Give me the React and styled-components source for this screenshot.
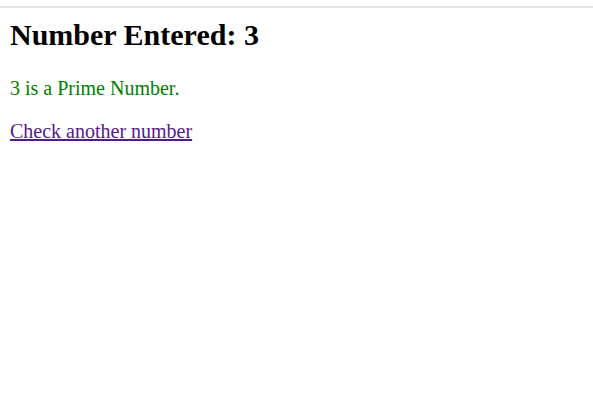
import styled, { createGlobalStyle } from "styled-components";

const Global = createGlobalStyle`
  body {
    margin: 0;
    font-family: "Liberation Serif", "Times New Roman", serif;
    background: #fff;
  }
`;

const TopRule = styled.div`
  height: 2px;
  margin-top: 6px;
  background: #e3e3e3;
`;

const Page = styled.div`
  padding: 0 10px;
`;

const Title = styled.h1`
  font-size: 30px;
  font-weight: bold;
  margin: 10px 0 0;
  color: #000;
`;

const Result = styled.p`
  font-size: 20px;
  margin: 25px 0 0;
  color: ${props => (props.prime ? "green" : "red")};
`;

const LinkRow = styled.p`
  font-size: 20px;
  margin: 20px 0 0;
`;

const BackLink = styled.a`
  color: #551a8b;
  text-decoration: underline;
`;

export default function App() {
  return (
    <>
      <Global />
      <TopRule />
      <Page>
        <Title>Number Entered: 3</Title>
        <Result prime>3 is a Prime Number.</Result>
        <LinkRow>
          <BackLink href="#">Check another number</BackLink>
        </LinkRow>
      </Page>
    </>
  );
}
